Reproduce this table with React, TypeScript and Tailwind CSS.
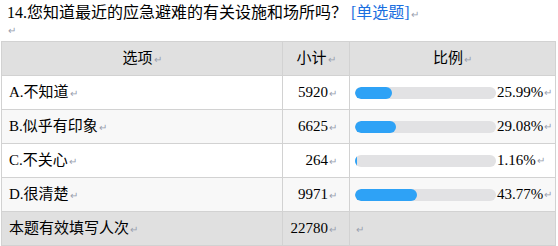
import React from 'react';

const rows = [
  { label: 'A.不知道', count: 5920, pct: 25.99 },
  { label: 'B.似乎有印象', count: 6625, pct: 29.08 },
  { label: 'C.不关心', count: 264, pct: 1.16 },
  { label: 'D.很清楚', count: 9971, pct: 43.77 },
];

const Mark = () => <span className="text-[10px] text-gray-400 ml-px">↵</span>;

export default function App() {
  return (
    <div
      className="w-[558px] h-[246px] bg-white text-black overflow-hidden"
      style={{ fontFamily: '"Liberation Serif", "Noto Sans CJK SC", serif' }}
    >
      <div className="h-[25px] pl-[7px] pt-[3px] text-[16px] leading-[20px] whitespace-nowrap">
        14.您知道最近的应急避难的有关设施和场所吗？
        <span className="ml-[4px] text-[#1a6fe0]">[单选题]</span>
        <Mark />
      </div>
      <div className="h-[16px] pl-[8px] text-[10px] leading-[12px] text-gray-400">↵</div>
      <table className="ml-px table-fixed border-collapse text-[15px]">
        <colgroup>
          <col className="w-[281px]" />
          <col className="w-[67px]" />
          <col className="w-[206px]" />
        </colgroup>
        <thead>
          <tr className="h-[34px] bg-[#e0e0e0]">
            <th className="border border-[#d2d2d2] font-normal text-center">选项<Mark /></th>
            <th className="border border-[#d2d2d2] font-normal text-center">小计<Mark /></th>
            <th className="border border-[#d2d2d2] font-normal text-center">比例<Mark /></th>
          </tr>
        </thead>
        <tbody>
          {rows.map((r, i) => (
            <tr key={r.label} className={`h-[34px] ${i % 2 ? 'bg-[#f8f8f8]' : 'bg-white'}`}>
              <td className="border border-[#d2d2d2] pl-[7px]">{r.label}<Mark /></td>
              <td className="border border-[#d2d2d2] text-right pr-[12px]">{r.count}<Mark /></td>
              <td className="border border-[#d2d2d2] pl-[5px] pr-0">
                <div className="flex items-center whitespace-nowrap">
                  <div className="w-[141px] h-[12px] rounded-full bg-[#e2e2e4] overflow-hidden shrink-0">
                    <div className="h-full rounded-full bg-[#2ea2f6]" style={{ width: `${r.pct}%` }} />
                  </div>
                  <span className="ml-px">{r.pct.toFixed(2)}%</span>
                  <Mark />
                </div>
              </td>
            </tr>
          ))}
          <tr className="h-[34px] bg-[#e0e0e0]">
            <td className="border border-[#d2d2d2] pl-[7px]">本题有效填写人次<Mark /></td>
            <td className="border border-[#d2d2d2] text-right pr-[12px]">22780<Mark /></td>
            <td className="border border-[#d2d2d2] pl-[5px]"><Mark /></td>
          </tr>
        </tbody>
      </table>
    </div>
  );
}
